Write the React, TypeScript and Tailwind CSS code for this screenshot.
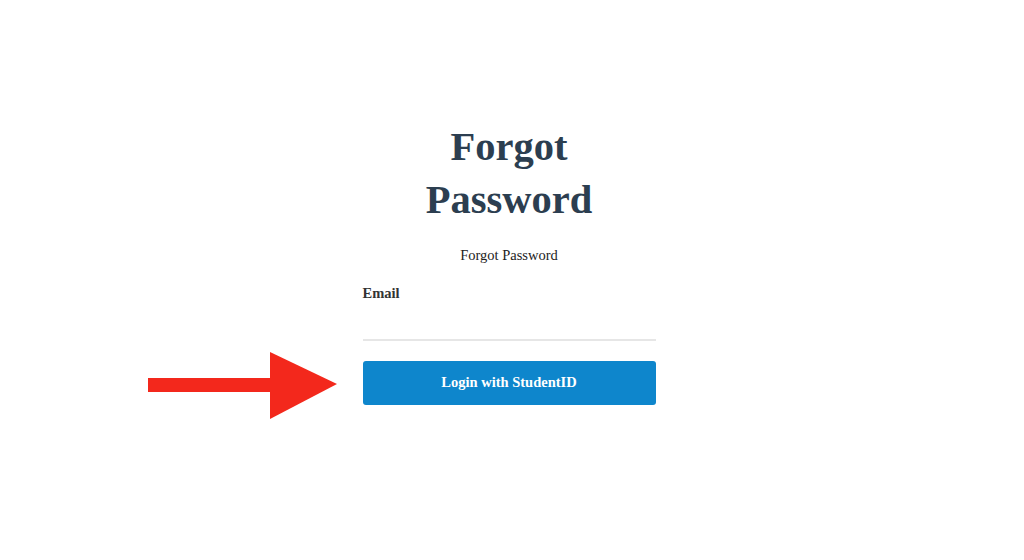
export default function App() {
  return (
    <div className="flex h-[560px] w-full justify-center bg-white font-['Liberation_Serif',serif]">
      <div className="mr-[6px] flex w-[293px] flex-col pt-[120px]">
        <h1 className="mx-auto w-[240px] text-center text-[40.5px] font-bold leading-[53px] text-[#2c3e50]">
          Forgot Password
        </h1>
        <p className="mt-[19px] text-center text-[14.5px] leading-[20px] text-[#222]">Forgot Password</p>

        <label className="mt-[18px] text-[14.5px] font-bold leading-[20px] text-[#333]">Email</label>
        <input
          type="email"
          className="h-[38px] w-full border-b-2 border-[#e6e6e6] bg-transparent text-[14.5px] outline-none"
        />

        <div className="relative mt-[20px]">
          <svg
            className="absolute right-[calc(100%+26px)] top-[-9px]"
            width="189"
            height="67"
            viewBox="0 0 189 67"
          >
            <rect x="0" y="26" width="124" height="14" fill="#f3281c" />
            <polygon points="122,0 189,32 122,67" fill="#f3281c" />
          </svg>
          <button className="h-[44px] w-full rounded-[3px] bg-[#0e86cc] text-[14.5px] font-bold text-white">
            Login with StudentID
          </button>
        </div>
      </div>
    </div>
  );
}
